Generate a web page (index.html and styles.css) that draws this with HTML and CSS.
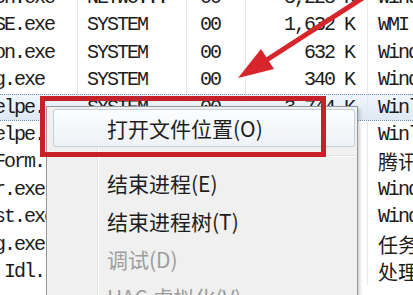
FILE: index.html
```html
<!DOCTYPE html>
<html>
<head>
<meta charset="utf-8">
<link rel="stylesheet" href="styles.css">
</head>
<body>
<div class="list">
  <div class="row"><span class="c1">PPAPSvcn.exe</span><span class="c2">NETWO...</span><span class="c3">00</span><span class="c4">3,228 K</span><span class="c5">Windows</span></div>
  <div class="row"><span class="c1">WmiPrvSE.exe</span><span class="c2">SYSTEM</span><span class="c3">00</span><span class="c4">1,632 K</span><span class="c5">WMI Provider Host</span></div>
  <div class="row"><span class="c1">TXPlaton.exe</span><span class="c2">SYSTEM</span><span class="c3">00</span><span class="c4">632 K</span><span class="c5">Windows</span></div>
  <div class="row"><span class="c1">taskeng.exe</span><span class="c2">SYSTEM</span><span class="c3">00</span><span class="c4">340 K</span><span class="c5">Windows</span></div>
  <div class="row sel"><span class="c1">DTMgrHelpe...</span><span class="c2">SYSTEM</span><span class="c3">00</span><span class="c4">3,744 K</span><span class="c5">Winlogon</span></div>
  <div class="row"><span class="c1">SogouHelpe...</span><span class="c2">SYSTEM</span><span class="c3">00</span><span class="c4">1,208 K</span><span class="c5">Winlogon</span></div>
  <div class="row"><span class="c1">QQPlatForm...</span><span class="c2">SYSTEM</span><span class="c3">00</span><span class="c4">2,516 K</span><span class="c5"><span class="cjk">腾讯</span></span></div>
  <div class="row"><span class="c1">PPSWebr.exe</span><span class="c2">SYSTEM</span><span class="c3">00</span><span class="c4">880 K</span><span class="c5">Windows</span></div>
  <div class="row"><span class="c1">wpscenst.exe</span><span class="c2">SYSTEM</span><span class="c3">00</span><span class="c4">1,040 K</span><span class="c5">Windows</span></div>
  <div class="row"><span class="c1">ksafeng.exe</span><span class="c2">SYSTEM</span><span class="c3">00</span><span class="c4">4,112 K</span><span class="c5"><span class="cjk">任务管理器</span></span></div>
  <div class="row"><span class="c1">System Idl...</span><span class="c2">SYSTEM</span><span class="c3">99</span><span class="c4">24 K</span><span class="c5"><span class="cjk">处理器空闲</span></span></div>
</div>

<div class="menu">
  <div class="item hover">打开文件位置(O)</div>
  <div class="sep"></div>
  <div class="item">结束进程(E)</div>
  <div class="item">结束进程树(T)</div>
  <div class="item dis">调试(D)</div>
  <div class="item dis">UAC 虚拟化(V)</div>
</div>

<div class="redbox"></div>

<svg class="arrow" width="413" height="295" viewBox="0 0 413 295">
  <line x1="372" y1="-8" x2="262" y2="63" stroke="#d8252b" stroke-width="5" stroke-linecap="round"/>
  <polygon points="238,78 261,49 274,69" fill="#d8252b"/>
</svg>
</body>
</html>
```

FILE: styles.css
```css
html, body {
  margin: 0;
  padding: 0;
}
body {
  width: 413px;
  height: 295px;
  overflow: hidden;
  background: #ffffff;
  position: relative;
  font-family: "Liberation Mono", "Noto Sans CJK SC", monospace;
}
.list {
  margin: -16px 0 0 -70px;
}
.row {
  display: grid;
  grid-template-columns: 148px 109px 59px 122px 200px;
  height: 27.4px;
  line-height: 27.4px;
  font-size: 20px;
  letter-spacing: -2px;
  color: #1c1c1c;
  box-sizing: border-box;
}
.row > span {
  box-sizing: border-box;
  overflow: hidden;
  white-space: nowrap;
  border-right: 1px solid #e9e9e9;
}
.row > .c5 {
  border-right: none;
}
.c1 { padding-left: 4px; }
.c2 { padding-left: 9px; }
.c3 { padding-left: 13px; }
.c4 { text-align: right; padding-right: 13px; }
.c5 { padding-left: 10px; }
.row.sel {
  background: linear-gradient(#f1f6fc, #dde8f4);
  border-top: 1px dotted #6f8db4;
  border-bottom: 1px dotted #6f8db4;
  line-height: 25.4px;
}
.cjk {
  font-family: "Noto Sans CJK SC", sans-serif;
  font-size: 20px;
  letter-spacing: 0;
}
.menu {
  position: absolute;
  left: 46px;
  top: 106px;
  width: 312px;
  height: 210px;
  box-sizing: border-box;
  border: 1px solid #979797;
  padding: 2px 2px 0 6px;
  background:
    linear-gradient(to right, transparent 50px, #e2e3e3 50px, #e2e3e3 51px, #ffffff 51px, #ffffff 52px, transparent 52px),
    #f0f0f0;
  box-shadow: 2px 2px 3px rgba(0, 0, 0, 0.18);
  font-family: "Noto Sans CJK SC", sans-serif;
  font-size: 21px;
  color: #1e1e1e;
}
.item {
  height: 38px;
  display: flex;
  align-items: center;
  box-sizing: border-box;
  padding-left: 53px;
  border: 1px solid transparent;
  border-radius: 3px;
  white-space: nowrap;
}
.item.hover {
  border-color: #c4d0dd;
  background: linear-gradient(#fcfdfe, #eef2f7);
}
.item.dis {
  color: #9d9d9d;
}
.sep {
  height: 17px;
  display: flex;
  align-items: center;
  margin-left: 46px;
}
.sep::after {
  content: "";
  flex: 1;
  height: 1px;
  background: #e0e0e0;
  border-bottom: 1px solid #ffffff;
}
.redbox {
  position: absolute;
  left: 40px;
  top: 96px;
  width: 286px;
  height: 61px;
  box-sizing: border-box;
  border: 5px solid #c6202a;
}
.arrow {
  position: absolute;
  left: 0;
  top: 0;
}
```
